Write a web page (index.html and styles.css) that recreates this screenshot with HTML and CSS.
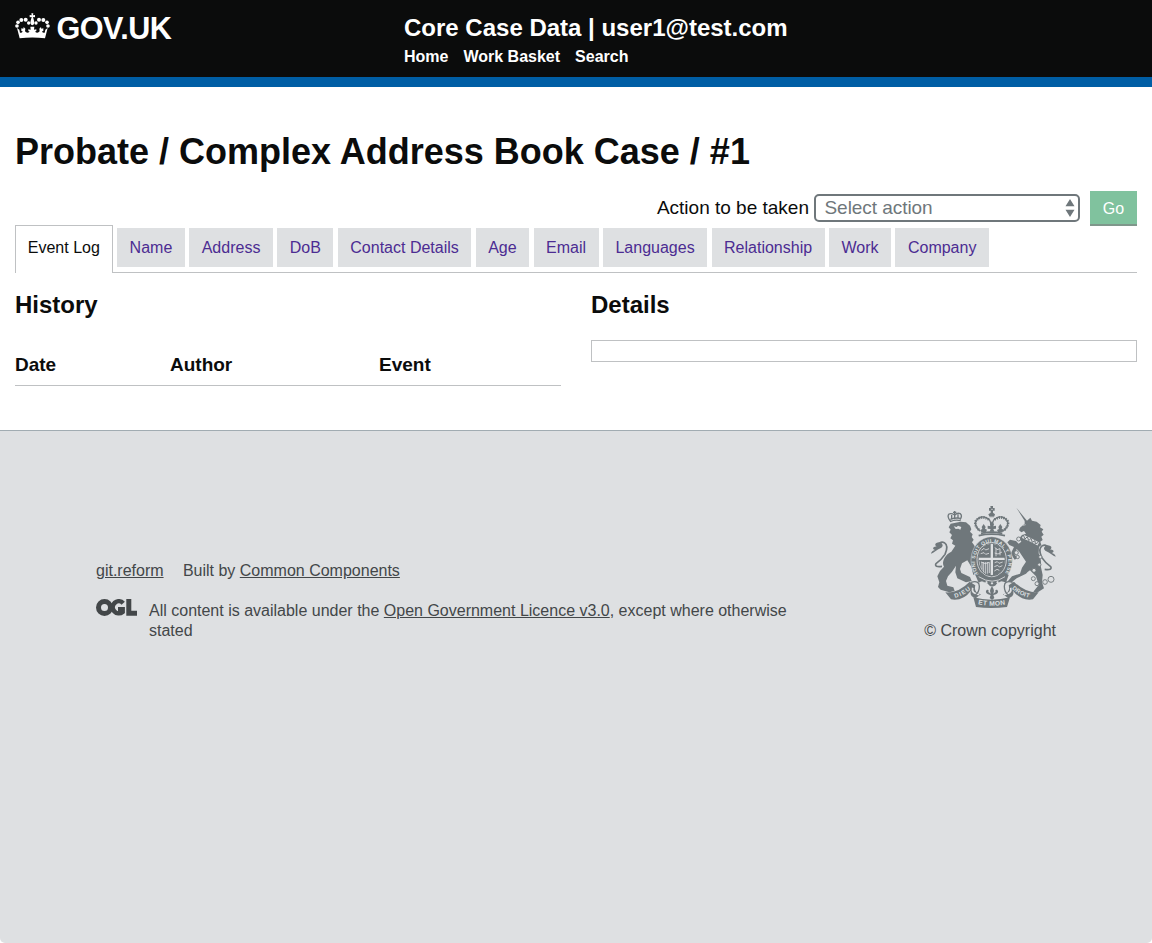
FILE: index.html
```html
<!DOCTYPE html>
<html lang="en">
<head>
<meta charset="utf-8">
<title>Core Case Data</title>
<link rel="stylesheet" href="styles.css">
</head>
<body>
<header class="header">
  <a class="brand">
    <svg class="crown" viewBox="45 38 105 78" fill="#fff">
      <circle cx="51" cy="77" r="5.5"/><circle cx="54" cy="66" r="5.5"/><circle cx="64" cy="59" r="6"/><circle cx="77" cy="58" r="6"/><circle cx="86" cy="68" r="5"/>
      <circle cx="144" cy="77" r="5.5"/><circle cx="141" cy="66" r="5.5"/><circle cx="130" cy="59" r="6"/><circle cx="117" cy="58" r="6"/><circle cx="108" cy="68" r="5"/>
      <path d="M94 39h6l-1 6 6-1v7l-6-1 3 11q3 11-5 14-8-3-5-14l3-11-6 1v-7l6 1z"/>
      <path d="M51 83l7 5 2 9q6 2 8-4l-4-1v-8l6 1 1-5 5 5-1 8q6 8 14 1l-4-2v-5l7 1-1-9h12l-1 9 7-1v5l-4 2q8 7 14-1l-1-8 5-5 1 5 6-1v8l-4 1q2 6 8 4l2-9 7-5-8 31q-38-5-76 0z"/>
    </svg>
    <span class="brand-name">GOV.UK</span>
  </a>
  <div class="service">
    <div class="service-name">Core Case Data | user1@test.com</div>
    <nav class="nav"><a>Home</a><a>Work Basket</a><a>Search</a></nav>
  </div>
</header>
<main class="main">
  <h1 class="title">Probate / Complex Address Book Case / #1</h1>
  <div class="actions">
    <label class="action-label">Action to be taken</label>
    <div class="select"><span>Select action</span>
      <svg class="arrows" viewBox="0 0 10 18" fill="#6f777b"><path d="M5 0l4.5 7.3h-9zM5 18l4.5-7.3h-9z"/></svg>
    </div>
    <button class="go">Go</button>
  </div>
  <nav class="tabs">
    <a class="tab tab-active">Event Log</a><a class="tab">Name</a><a class="tab">Address</a><a class="tab">DoB</a><a class="tab">Contact Details</a><a class="tab">Age</a><a class="tab">Email</a><a class="tab">Languages</a><a class="tab">Relationship</a><a class="tab">Work</a><a class="tab">Company</a>
  </nav>
  <div class="columns">
    <section>
      <h2 class="heading">History</h2>
      <div class="history-head"><span>Date</span><span>Author</span><span>Event</span></div>
    </section>
    <section>
      <h2 class="heading">Details</h2>
      <div class="details-box"></div>
    </section>
  </div>
</main>
<footer class="footer">
  <div class="footer-meta">
    <div class="footer-links"><a class="link">git.reform</a><span>Built by <a class="link">Common Components</a></span></div>
    <div class="licence">
      <svg class="ogl" viewBox="0 0 41 17" fill="none" stroke="#434749" stroke-width="5">
        <circle cx="8.5" cy="8.5" r="6"/>
        <path d="M27.2 4.2A6 6 0 1 0 26.6 12.9V10.3H22" stroke-width="4.6"/>
        <path d="M32.8 0V14.2H41"/>
      </svg>
      <p class="licence-text">All content is available under the <a class="link">Open Government Licence v3.0</a>, except where otherwise stated</p>
    </div>
  </div>
  <div class="copyright">
    <svg class="crest" viewBox="33 33 375 306" fill="#6f777b">
      <defs>
        <path id="garter" d="M177 238A50 58 0 1 1 253 238"/>
        <path id="dieu" d="M105 309Q132 302 156 281"/>
        <path id="etmon" d="M174 328Q216 336 258 328"/>
        <path id="droit" d="M275 281Q300 303 332 309"/>
        <g id="tail">
          <path d="M66 214Q42 217 48 206Q66 192 75 178Q87 152 73 143Q62 137 53 151" fill="none" stroke="#6f777b" stroke-width="5"/>
          <path d="M33 176q2-9 12-11-9-3-4-8 5-4 9-2-8-6-1-11 9-4 15 0 8 8 0 14-12 5-17 10-8 6-14 8z"/>
        </g>
      </defs>
      <!-- lion -->
      <g fill="none" stroke="#6f777b" stroke-width="4">
        <path d="M91 78q-11-14-4-21 8-3 17 3 8-8 17-4 7 6-1 18M90 80q16-7 32-3M91 73q16-6 30-3"/>
        <path d="M104 48v25M99 52h10M95 60v12M114 58v12"/>
      </g>
      <path d="M92 86L122 80 138 82 150 92 154 103 150 110 158 118 155 126 161 134 156 142 162 150 170 165 160 180 172 205 168 235 160 240 154 215 142 196 126 205 120 222 124 234 150 246 155 258 138 262 112 250 106 232 108 212Q96 232 84 244L78 258 82 272 100 277 104 288 88 292 62 284 54 276 58 262 52 244 60 228 72 215Q66 205 72 192 80 176 94 170L106 152 96 146 99 136 91 130 96 120 88 112 92 104 86 97z"/>
      <path d="M101 94l9 2 4-4 10 4-3 8-6-3-8 1z" fill="#dee0e2"/>
      <use href="#tail"/>
      <!-- central crown -->
      <g fill="none" stroke="#6f777b">
        <path d="M181 109q-20-17-13-31 15-21 38-6 7 5 8 29M249 109q20-17 13-31-15-21-38-6-7 5-8 29" stroke-width="4"/>
        <path d="M177 105q-16-16-9-28 17-18 39-3M253 105q16-16 9-28-17-18-39-3" stroke-width="8" stroke-dasharray="4 3"/>
        <path d="M176 122q38-9 79 0M183 115q31-7 64 0" stroke-width="5"/>
      </g>
      <path d="M211 33h8v6h5v8h-5v6l6 5-3 9h-13l-4-9 7-5v-6h-5v-8h5zM216 78l6 10-2 6 8-2v9l-8 1 3 8h-14l3-8-9-1v-9l9 2-2-6zM191 87l6 9-2 5 6 3-3 7h-14l-3-6 6-3-2-6zM241 87l6 9-2 5 6 3-3 7h-14l-3-6 6-3-2-6z"/>
      <path d="M207 66h18M213 43h6" stroke="#dee0e2" stroke-width="2"/>
      <!-- unicorn -->
      <path d="M289 38L321 77 331 68 336 77 350 80 362 90 360 97 370 103 365 110 371 119 364 125 368 135 361 140 364 150 357 156 356 175Q366 195 362 212L368 240 366 262 372 280 350 294 340 290 356 270 348 244 330 226Q322 232 318 236L290 250 275 262 264 258 276 244 300 236 306 218 318 200 306 182 298 170 290 162 284 178 292 190 284 194 272 176 282 156 268 150 262 142 270 134 288 138 296 146 304 140 298 130 306 120 318 116 312 108 304 112 297 106 300 98 314 86 314 78z"/>
      <path d="M308 124q25 10 47 23" fill="none" stroke="#dee0e2" stroke-width="11"/>
      <path d="M306 132q22 9 46 23M310 120l5 12 7-7 4 12 7-7 4 12 8-5 1 10 9-5" fill="none" stroke="#6f777b" stroke-width="3"/>
      <path d="M309 91l8-2" fill="none" stroke="#dee0e2" stroke-width="2"/>
      <use href="#tail" transform="matrix(-1 0 0 1 440 9)"/>
      <!-- garter and shield -->
      <ellipse cx="215" cy="196" rx="62" ry="71" stroke="#dee0e2" stroke-width="1.5"/>
      <ellipse cx="215" cy="194" rx="44" ry="52" fill="none" stroke="#dee0e2" stroke-width="2.5"/>
      <ellipse cx="215" cy="193" rx="39" ry="47" fill="#dee0e2"/>
      <path d="M178 175q2-16 20-25l14-4v42h-36zM219 146q31 6 36 36v6h-36zM177 195h35v48q-31-10-35-48zM219 195h36q-3 38-36 48z"/>
      <g fill="none" stroke="#dee0e2" stroke-width="2.5">
        <path d="M184 166l8-6 5 5 10-4M182 176l10-3 5 5 10-3M225 157l6 7 9-3v20M224 174l10 3 12-6M228 184v-25M224 203l8-3 5 5 11-4M223 215l10-4 5 5 9-4M223 228l8-5 7 3"/>
        <path d="M186 201v23m5-23v31m6-31v35m6-35v35M183 201q13 9 25 1v32"/>
      </g>
      <text class="motto motto-garter" fill="#dee0e2"><textPath href="#garter" textLength="246">HONI SOIT QUI MAL Y PENSE</textPath></text>
      <path d="M166 240l21-5q27 25 57 0l22 5-8 23q-20-12-31 8-11 7-20 0-11-19-31-8z"/>
      <path d="M176 245q41 27 79 0" fill="none" stroke="#dee0e2" stroke-width="2.5"/>
      <path d="M199 258l5 3-4 4-5-3zM216 261l4 4-4 4-4-4zM232 258l5 3-4 4-5-3z" fill="#dee0e2"/>
      <!-- chain -->
      <g fill="#dee0e2" stroke="#6f777b" stroke-width="2.7"><circle cx="296" cy="132" r="6"/><circle cx="289" cy="173" r="6"/><circle cx="293" cy="186" r="5"/><circle cx="361" cy="186" r="5"/><circle cx="358" cy="209" r="5"/><circle cx="342" cy="226" r="6"/><circle cx="340" cy="251" r="6"/><circle cx="351" cy="266" r="6"/><circle cx="375" cy="261" r="7"/><circle cx="393" cy="253" r="9"/></g>
      <!-- motto ribbon -->
      <path d="M76 292q39 3 73-32l17 11q-6 22 17 27l-16 12q-20-6-14-23-24 32-60 26zM356 292q-39 3-74-32l-16 11q6 22-17 27l16 12q20-6 14-23 24 32 60 26z"/>
      <path d="M158 278q-5 18 20 21M272 278q5 18-20 21" fill="none" stroke="#dee0e2" stroke-width="5"/>
      <path d="M153 262q25-7 25 12 0 18-12 26M278 262q-25-7-25 12 0 18 12 26" fill="none" stroke="#6f777b" stroke-width="4"/>
      <path d="M160 307q54 14 110 0l-9 29q-47 6-93 0z"/>
      <g class="motto" fill="#dee0e2"><text class="motto-side"><textPath href="#dieu" textLength="54">DIEU</textPath></text><text class="motto-base"><textPath href="#etmon" textLength="82">ET MON</textPath></text><text class="motto-side"><textPath href="#droit" textLength="59">DROIT</textPath></text></g>
      <path d="M216 274q10 13 3 22l8-5q-3-8 4-7 8 6-3 14l-8 2 3 9-7 6-7-6 3-9-8-2q-11-8-3-14 7-1 4 7l8 5q-7-9 3-22z"/>
    </svg>
    <div>© Crown copyright</div>
  </div>
</footer>
</body>
</html>
```
FILE: styles.css
```css
* { box-sizing: border-box; }
html { background: #fff; }
body {
  margin: 0;
  height: 943px;
  display: flex;
  flex-direction: column;
  font-family: "Liberation Sans", Arial, sans-serif;
  font-size: 16px;
  line-height: 20px;
  color: #0b0c0c;
}
.header {
  height: 87px;
  flex: none;
  display: flex;
  background: #0b0c0c;
  border-bottom: 10px solid #005ea5;
  color: #fff;
  font-weight: bold;
  padding: 12px 15px 0;
}
.brand { display: flex; width: 389px; }
.crown { width: 35px; height: 26px; margin: 1px 6.5px 0 0; }
.brand-name { font-size: 30.6px; line-height: 32px; letter-spacing: -0.5px; }
.service-name { font-size: 24px; line-height: 32px; }
.nav { display: flex; gap: 15px; line-height: 26px; }
.main { flex: none; height: 343px; padding: 43px 15px 0; }
.title { margin: 0; font-size: 36px; line-height: 44px; }
.actions { display: flex; justify-content: flex-end; margin-top: 17px; height: 34px; font-size: 19px; line-height: 34px; }
.action-label { margin-right: 5px; }
.select {
  display: flex;
  justify-content: space-between;
  align-items: center;
  width: 266px;
  height: 28px;
  margin: 3px 10px 0 0;
  padding: 0 3.5px 0 8.5px;
  border: 2px solid #6f777b;
  border-radius: 5px;
  color: #6f777b;
  letter-spacing: -0.05px;
}
.arrows { width: 10px; height: 18px; }
.go {
  width: 47px;
  height: 35px;
  padding: 2px 0 0;
  border: 0;
  border-bottom: 2px solid #7f978b;
  background: #80c29e;
  color: #fff;
  font: 16px/31px "Liberation Sans", Arial, sans-serif;
}
.tabs { display: flex; align-items: flex-start; gap: 4.53px; height: 48px; border-bottom: 1px solid #bfc1c3; }
.tab { height: 39px; margin-top: 3px; padding: 0 12.45px; background: #dee0e2; color: #4c2c92; line-height: 39px; white-space: nowrap; }
.tab-active { height: 48px; margin-top: 0; padding: 0 11.8px; border: 1px solid #bfc1c3; border-bottom: 0; background: #fff; color: #0b0c0c; line-height: 43px; }
.columns { display: grid; grid-template-columns: 1fr 1fr; gap: 30px; padding-top: 17px; }
.heading { margin: 0; font-size: 24px; line-height: 30px; }
.history-head { display: grid; grid-template-columns: 155px 209px 1fr; height: 66px; padding-top: 30px; border-bottom: 1px solid #bfc1c3; font-size: 19px; line-height: 29px; font-weight: bold; }
.details-box { height: 22px; margin-top: 20px; border: 1px solid #bfc1c3; }
.footer {
  flex: 1;
  display: flex;
  justify-content: space-between;
  align-items: flex-start;
  padding: 75px 96px 0;
  background: #dee0e2;
  border-top: 1px solid #a1acb2;
  border-radius: 0 0 5px 5px;
  color: #434749;
}
.footer-meta { width: 692px; padding-top: 55px; }
.link { text-decoration: underline; }
.footer-links { display: flex; gap: 19.3px; }
.licence { display: flex; margin-top: 20px; }
.ogl { width: 41px; height: 17px; flex: none; margin-right: 12px; margin-top: -2px; }
.licence-text { margin: 0; }
.copyright { text-align: right; }
.crest { display: block; width: 125px; height: 102px; margin: 0 0 13px auto; }
.motto { font-weight: bold; }
.motto-garter { font-size: 15px; }
.motto-side { font-size: 18px; }
.motto-base { font-size: 20px; }
```
